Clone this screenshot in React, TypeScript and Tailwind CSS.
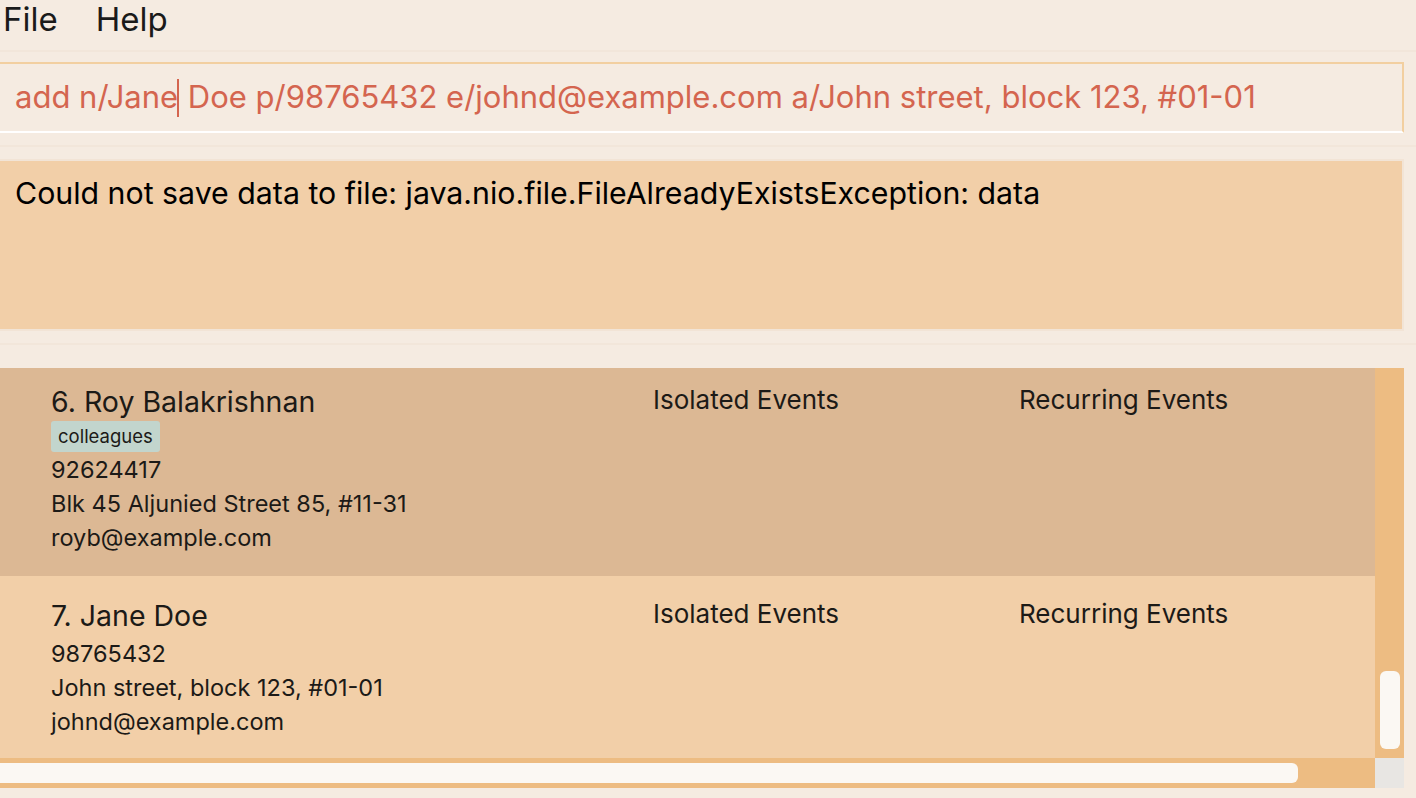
import React from "react";

const font = { fontFamily: "Inter, 'Noto Sans', sans-serif" };

function Person({
  name,
  tag,
  phone,
  address,
  email,
  bg,
  h,
  pt,
  ept,
  gap,
}: {
  name: string;
  tag?: string;
  phone: string;
  address: string;
  email: string;
  bg: string;
  h: string;
  pt: string;
  ept: string;
  gap: string;
}) {
  return (
    <div className={`flex ${bg} ${h} text-[#1c1a17]`}>
      <div className={`w-[653px] shrink-0 pl-[51px] ${pt} flex flex-col`}>
        <div className={`text-[28.5px] leading-[36px] ${gap}`}>{name}</div>
        {tag && (
          <div className="mt-[1px] mb-[1px] self-start bg-[#c2d5cd] rounded-[3px] px-[7px] h-[31px] flex items-center text-[18.5px]">
            {tag}
          </div>
        )}
        <div className="text-[23.5px] leading-[34px]">{phone}</div>
        <div className="text-[23.5px] leading-[34px]">{address}</div>
        <div className="text-[23.5px] leading-[34px]">{email}</div>
      </div>
      <div className={`w-[366px] shrink-0 ${ept} text-[26px] leading-[32px]`}>Isolated Events</div>
      <div className={`${ept} text-[26px] leading-[32px]`}>Recurring Events</div>
    </div>
  );
}

export default function App() {
  return (
    <div className="w-[1416px] h-[798px] bg-[#f5ebe1] overflow-hidden flex flex-col" style={font}>
      {/* menu */}
      <div className="h-[50px] flex items-start gap-[38px] pl-[3px] pt-[0px] text-[33px] leading-[38px] text-[#1a1a1a]">
        <span>File</span>
        <span>Help</span>
      </div>
      <div className="h-[2px] bg-[#f2e6da]" />
      <div className="h-[10px]" />
      {/* command box */}
      <div className="w-[1404px] h-[71px] border-t-2 border-r-2 border-[#f2cfa0] border-b-2 border-b-white flex items-center pl-[15px] text-[31px] text-[#d4654f]">
        <span>add n/Jane</span>
        <span className="w-[2px] h-[38px] bg-[#d4654f] -ml-[1px]" />
        <span className="whitespace-pre"> Doe p/98765432 e/johnd@example.com a/John street, block 123, #01-01</span>
      </div>
      <div className="h-[12px]" />
      <div className="h-[2px] bg-[#f2e6da]" />
      <div className="h-[12px]" />
      {/* result */}
      <div className="w-[1404px] border-2 border-l-0 border-[#f2e4d6]">
        <div className="h-[168px] bg-[#f2cfa8] pl-[15px] pt-[12px] text-[30.3px] leading-[40px] text-black">
          Could not save data to file: java.nio.file.FileAlreadyExistsException: data
        </div>
      </div>
      <div className="h-[12px]" />
      <div className="h-[2px] bg-[#f2e6da]" />
      <div className="h-[23px]" />
      {/* list */}
      <div className="w-[1404px] flex flex-col">
        <div className="flex">
          <div className="w-[1375px] flex flex-col">
            <Person
              name="6. Roy Balakrishnan"
              tag="colleagues"
              phone="92624417"
              address="Blk 45 Aljunied Street 85, #11-31"
              email="royb@example.com"
              bg="bg-[#dcb894]"
              h="h-[208px]"
              pt="pt-[16px]"
              ept="pt-[16px]"
              gap=""
            />
            <Person
              name="7. Jane Doe"
              phone="98765432"
              address="John street, block 123, #01-01"
              email="johnd@example.com"
              bg="bg-[#f2cfa8]"
              h="h-[182px]"
              pt="pt-[22px]"
              ept="pt-[22px]"
              gap="mb-[3px]"
            />
          </div>
          <div className="w-[29px] bg-[#edbc82] flex flex-col justify-end pb-[9px] items-center">
            <div className="w-[20px] h-[78px] rounded-[6px] bg-[#fbf8f3]" />
          </div>
        </div>
        <div className="flex h-[30px]">
          <div className="w-[1375px] bg-[#edbc82] flex items-center">
            <div className="w-[1298px] h-[20px] rounded-r-[6px] bg-[#fbf8f3]" />
          </div>
          <div className="w-[29px] bg-[#e8e6e3]" />
        </div>
      </div>
    </div>
  );
}
